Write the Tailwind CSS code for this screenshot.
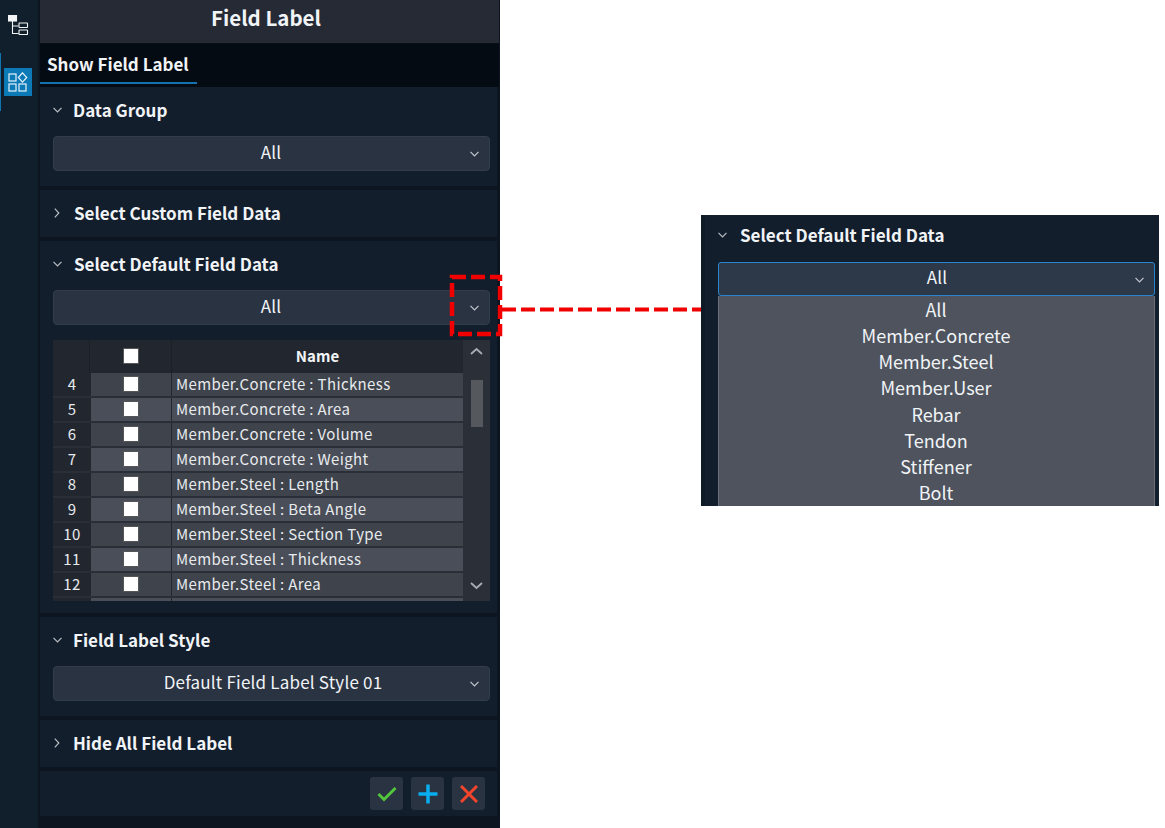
<!DOCTYPE html>
<html lang="en">
<head>
  <meta charset="UTF-8" />
  <title>Field Label</title>
  <script src="https://cdn.jsdelivr.net/npm/@tailwindcss/browser@4"></script>
</head>
<body class="bg-white">
  <div class="relative w-[1165px] h-[828px] overflow-hidden font-['Noto_Sans_CJK_KR','Noto_Sans',sans-serif] text-[#f1f4f7]">

    <!-- left app -->
    <div class="flex w-[500px] h-[828px] bg-[#0c1520]">
      <!-- icon rail -->
      <aside class="w-[38px] shrink-0 bg-[#111e2c] flex flex-col items-start">
        <div class="h-[53px] w-full flex items-start pt-[15px] pl-[8px]">
          <svg width="21" height="20" viewBox="0 0 21 20" fill="none" stroke="#f2f4f6" stroke-width="1.1">
            <rect x="0.500" y="0.500" width="8" height="5.500" fill="#f2f4f6" />
            <path d="M4.500 6v12.500h6M4.500 11h6" />
            <rect x="11" y="8" width="8.500" height="4.500" rx="0.500" />
            <rect x="11" y="15" width="8.500" height="4.500" rx="0.500" />
          </svg>
        </div>
        <div class="h-[58px] w-full border-l border-[#0f74b0] flex items-center pl-[3px]">
          <div class="w-[28px] h-[28px] bg-[#0d7ab8] flex items-center justify-center">
            <svg width="20" height="20" viewBox="0 0 20 20" fill="none" stroke="#e6f2f9" stroke-width="1.2">
              <rect x="1" y="2" width="7" height="7" />
              <path d="M14.500 0.800l4.200 4.700-4.200 4.700-4.200-4.700z" />
              <rect x="1" y="12" width="7" height="7" />
              <rect x="11" y="12" width="7" height="7" />
            </svg>
          </div>
        </div>
      </aside>

      <!-- panel -->
      <main class="w-[460px] shrink-0 ml-[2px]">
        <header class="h-[44px] w-[459px] bg-[#252a35] border-b border-[#0c0f14] flex items-center justify-center text-[20.500px] font-bold leading-none pb-[8px] pr-[7px]">Field Label</header>
        <div class="h-[43px] w-[459px] bg-[#050b12]">
          <div class="inline-block h-[40px] px-[7px] w-[157px] border-b-2 border-[#1672ad] text-[17px] font-bold leading-[40px]">Show Field Label</div>
        </div>

        <div class="w-[457px] flex flex-col gap-[4px]">
          <!-- Data Group -->
          <section class="h-[99px] bg-[#131e2c] pl-[13px] pr-[7px]">
            <h2 class="h-[49px] pb-[4px] flex items-center gap-[11px] text-[17px] font-bold">
              <svg width="9" height="6" viewBox="0 0 9 6" fill="none" stroke="#b9bec4" stroke-width="1.2"><path d="M0.500 0.800l4 4 4-4" /></svg>
              Data Group
            </h2>
            <div class="h-[35px] rounded-[4px] bg-[#2a3342] border border-[#333c4b] flex items-center relative text-[17px] tracking-[0.200px]">
              <span class="flex-1 text-center pb-[4px] pr-[1px]">All</span>
              <svg class="absolute right-[10px] top-[14px]" width="9" height="6" viewBox="0 0 9 6" fill="none" stroke="#c3c8ce" stroke-width="1.2"><path d="M0.500 0.800l4 4 4-4" /></svg>
            </div>
          </section>

          <!-- Select Custom Field Data -->
          <section class="h-[47px] bg-[#131e2c] pl-[14px] pb-[2px] flex items-center gap-[14px] text-[17px] font-bold">
            <svg width="6" height="10" viewBox="0 0 6 10" fill="none" stroke="#b9bec4" stroke-width="1.2"><path d="M0.800 0.700l4 4.300-4 4.300" /></svg>
            Select Custom Field Data
          </section>

          <!-- Select Default Field Data -->
          <section class="h-[372px] bg-[#131e2c] pl-[13px] pr-[7px]">
            <h2 class="h-[49px] pb-[4px] flex items-center gap-[12px] text-[17px] font-bold">
              <svg width="9" height="6" viewBox="0 0 9 6" fill="none" stroke="#b9bec4" stroke-width="1.2"><path d="M0.500 0.800l4 4 4-4" /></svg>
              Select Default Field Data
            </h2>
            <div class="h-[35px] rounded-[4px] bg-[#2a3342] border border-[#333c4b] flex items-center relative text-[17px] tracking-[0.200px]">
              <span class="flex-1 text-center pb-[4px] pr-[1px]">All</span>
              <svg class="absolute right-[10px] top-[14px]" width="9" height="6" viewBox="0 0 9 6" fill="none" stroke="#c3c8ce" stroke-width="1.2"><path d="M0.500 0.800l4 4 4-4" /></svg>
            </div>

            <!-- table -->
            <div class="mt-[15px] h-[261px] flex bg-[#272b33] overflow-hidden">
              <div class="w-[410px] shrink-0">
                <div class="h-[33px] flex text-[15px] font-bold">
                  <div class="w-[37px] bg-[#22262e] border-r border-[#1b1f26]"></div>
                  <div class="w-[82px] bg-[#22262e] border-r border-[#1b1f26] flex items-center justify-center pb-[2px]">
                    <span class="w-[16px] h-[16px] bg-white rounded-[1px] border border-[#555]"></span>
                  </div>
                  <div class="flex-1 bg-[#22262e] flex items-center justify-center">Name</div>
                </div>
                <div id="rows"></div>
              </div>
              <div class="flex-1 bg-[#2a2f38] relative">
                <svg class="absolute left-[7px] top-[7px]" width="13" height="8" viewBox="0 0 13 8" fill="none" stroke="#a9adb3" stroke-width="1.800"><path d="M1 7l5.500-5 5.500 5" /></svg>
                <div class="absolute left-[8px] top-[40px] w-[12px] h-[47px] bg-[#55585d]"></div>
                <svg class="absolute left-[7px] top-[242px]" width="13" height="8" viewBox="0 0 13 8" fill="none" stroke="#a9adb3" stroke-width="1.800"><path d="M1 1l5.500 5 5.500-5" /></svg>
              </div>
            </div>
          </section>

          <!-- Field Label Style -->
          <section class="h-[99px] bg-[#131e2c] pl-[13px] pr-[7px]">
            <h2 class="h-[49px] pb-[4px] flex items-center gap-[11px] text-[17px] font-bold">
              <svg width="9" height="6" viewBox="0 0 9 6" fill="none" stroke="#b9bec4" stroke-width="1.2"><path d="M0.500 0.800l4 4 4-4" /></svg>
              Field Label Style
            </h2>
            <div class="h-[35px] rounded-[4px] bg-[#2a3342] border border-[#333c4b] flex items-center relative text-[17px] tracking-[0.200px]">
              <span class="flex-1 text-center pb-[4px] pl-[3px]">Default Field Label Style 01</span>
              <svg class="absolute right-[10px] top-[14px]" width="9" height="6" viewBox="0 0 9 6" fill="none" stroke="#c3c8ce" stroke-width="1.2"><path d="M0.500 0.800l4 4 4-4" /></svg>
            </div>
          </section>

          <!-- Hide All Field Label -->
          <section class="h-[47px] bg-[#131e2c] pl-[14px] pb-[2px] flex items-center gap-[13px] text-[17px] font-bold">
            <svg width="6" height="10" viewBox="0 0 6 10" fill="none" stroke="#b9bec4" stroke-width="1.2"><path d="M0.800 0.700l4 4.300-4 4.300" /></svg>
            Hide All Field Label
          </section>

          <!-- footer buttons -->
          <section class="h-[45px] bg-[#131e2c] flex items-center justify-end gap-[8px] pr-[12px]">
            <button class="w-[33px] h-[33px] rounded-[3px] bg-[#2a3342] flex items-center justify-center">
              <svg width="20" height="16" viewBox="0 0 20 16" fill="none" stroke="#52c63c" stroke-width="3"><path d="M1.500 8l5.500 5.500L18.500 2" /></svg>
            </button>
            <button class="w-[33px] h-[33px] rounded-[3px] bg-[#2a3342] flex items-center justify-center">
              <svg width="20" height="20" viewBox="0 0 20 20" fill="none" stroke="#08aef0" stroke-width="3.500"><path d="M10 0.500v19M0.500 10h19" /></svg>
            </button>
            <button class="w-[33px] h-[33px] rounded-[3px] bg-[#2a3342] flex items-center justify-center">
              <svg width="18" height="18" viewBox="0 0 18 18" fill="none" stroke="#f2452c" stroke-width="3"><path d="M1 1l16 16M17 1L1 17" /></svg>
            </button>
          </section>
        </div>
      </main>
    </div>

    <!-- red highlight box and connector -->
    <svg class="absolute left-[448px] top-[273px]" width="255" height="66" viewBox="0 0 255 66" fill="none" stroke="#f00000" stroke-width="4.500">
      <rect x="4" y="4" width="48" height="57" stroke-dasharray="14 5" />
      <path d="M54 36.500h199" stroke-width="4" stroke-dasharray="14 5" />
    </svg>

    <!-- callout: opened dropdown -->
    <div class="absolute left-[701px] top-[215px] w-[458px] h-[291px] bg-[#131e2c] border-l-[4px] border-[#0f1a27] overflow-hidden">
      <h2 class="h-[47px] pb-[7px] pl-[13px] flex items-center gap-[13px] text-[17px] font-bold">
        <svg width="9" height="6" viewBox="0 0 9 6" fill="none" stroke="#b9bec4" stroke-width="1.2"><path d="M0.500 0.800l4 4 4-4" /></svg>
        Select Default Field Data
      </h2>
      <div class="ml-[13px] w-[437px]">
        <div class="h-[34px] rounded-[3px] bg-[#2d3849] border border-[#2a85cf] flex items-center relative text-[17px] tracking-[0.200px]">
          <span class="flex-1 text-center pb-[4px] pl-[1px]">All</span>
          <svg class="absolute right-[10px] top-[14px]" width="9" height="6" viewBox="0 0 9 6" fill="none" stroke="#c3c8ce" stroke-width="1.2"><path d="M0.500 0.800l4 4 4-4" /></svg>
        </div>
        <ul class="h-[220px] bg-[#4e535d] border-x border-[#69707a] text-center text-[18px] leading-[26.150px] pr-[1px]">
          <li>All</li>
          <li>Member.Concrete</li>
          <li>Member.Steel</li>
          <li>Member.User</li>
          <li>Rebar</li>
          <li>Tendon</li>
          <li>Stiffener</li>
          <li>Bolt</li>
        </ul>
      </div>
    </div>
  </div>

  <script>
    const rows = [
      ["4", "Member.Concrete : Thickness"],
      ["5", "Member.Concrete : Area"],
      ["6", "Member.Concrete : Volume"],
      ["7", "Member.Concrete : Weight"],
      ["8", "Member.Steel : Length"],
      ["9", "Member.Steel : Beta Angle"],
      ["10", "Member.Steel : Section Type"],
      ["11", "Member.Steel : Thickness"],
      ["12", "Member.Steel : Area"],
      ["", ""],
    ];

    document.getElementById("rows").innerHTML = rows
      .map(([no, name], i) => {
        const bg = i % 2 === 0 ? "bg-[#3e434c]" : "bg-[#4a4e58]";
        return `
          <div class="h-[25px] flex text-[15px] tracking-[0.370px] text-[#e8ebee] border-b-[2px] border-[#2a2e36]">
            <div class="w-[37px] bg-[#22262e] flex items-center justify-center pl-[1px]">${no}</div>
            <div class="w-[82px] ${bg} border-x border-[#23272e] flex items-center justify-center pb-[2px]">
              <span class="w-[16px] h-[16px] bg-white rounded-[1px] border border-[#555]"></span>
            </div>
            <div class="flex-1 ${bg} pl-[4px] flex items-center">${name}</div>
          </div>`;
      })
      .join("");
  </script>
</body>
</html>
